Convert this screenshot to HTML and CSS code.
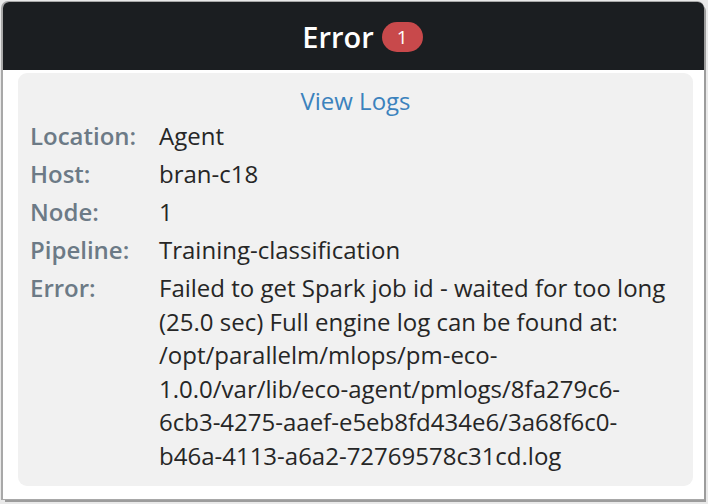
FILE: index.html
```html
<!DOCTYPE html>
<html>
<head>
<meta charset="utf-8">
<link rel="stylesheet" href="styles.css">
</head>
<body>
<div class="backdrop">
  <div class="popup">
    <div class="popup-header">
      <span class="title">Error</span>
      <span class="badge">1</span>
    </div>
    <div class="panel">
      <div class="link-row"><a class="view-logs" href="#">View Logs</a></div>
      <div class="row"><div class="label">Location:</div><div class="value">Agent</div></div>
      <div class="row"><div class="label">Host:</div><div class="value">bran-c18</div></div>
      <div class="row"><div class="label">Node:</div><div class="value">1</div></div>
      <div class="row"><div class="label">Pipeline:</div><div class="value">Training-classification</div></div>
      <div class="row"><div class="label">Error:</div><div class="value">Failed to get Spark job id - waited for too long (25.0 sec) Full engine log can be found at: /opt/parallelm/mlops/pm-eco-1.0.0/var/lib/eco-agent/pmlogs/8fa279c6-6cb3-4275-aaef-e5eb8fd434e6/3a68f6c0-b46a-4113-a6a2-72769578c31cd.log</div></div>
    </div>
  </div>
</div>
</body>
</html>
```

FILE: styles.css
```css
html, body {
  margin: 0;
  padding: 0;
}
body {
  width: 708px;
  height: 504px;
  overflow: hidden;
  background: #e9e9e9;
  font-family: "Open Sans", "Noto Sans", sans-serif;
}
.backdrop {
  padding: 2px 4px 0 3px;
}
.popup {
  background: #ffffff;
  border-radius: 6px 6px 0 0;
  box-shadow: -1px 0 0 1px #a8a8a8, 2px 3px 0 0 #9c9c9c;
  height: 497px;
  display: flex;
  flex-direction: column;
}
.popup-header {
  height: 68px;
  background: #1b1e21;
  border-radius: 6px 6px 0 0;
  display: flex;
  align-items: center;
  justify-content: center;
  gap: 8px;
  padding-left: 18px;
  color: #ffffff;
}
.title {
  font-size: 29px;
  font-weight: 600;
  line-height: 1;
}
.badge {
  background: #c8494b;
  color: #fff;
  font-size: 19px;
  font-weight: 500;
  width: 41px;
  height: 30px;
  border-radius: 15px;
  display: flex;
  align-items: center;
  justify-content: center;
  margin-top: 2px;
}
.panel {
  margin: 3px 11px 0 15px;
  background: #f1f1f1;
  border-radius: 9px;
  padding: 11px 12px 0 12px;
  height: 402px;
}
.link-row {
  text-align: center;
  font-size: 24px;
  line-height: 33px;
  margin-bottom: 2px;
}
.view-logs {
  color: #3b82bd;
  text-decoration: none;
}
.row {
  display: flex;
  font-size: 24px;
  line-height: 33.6px;
  margin-bottom: 4.4px;
}
.label {
  width: 129px;
  flex: none;
  color: #6c7a86;
  font-weight: 600;
}
.value {
  color: #262626;
  flex: 1;
  min-width: 0;
  max-width: 510px;
}
```
